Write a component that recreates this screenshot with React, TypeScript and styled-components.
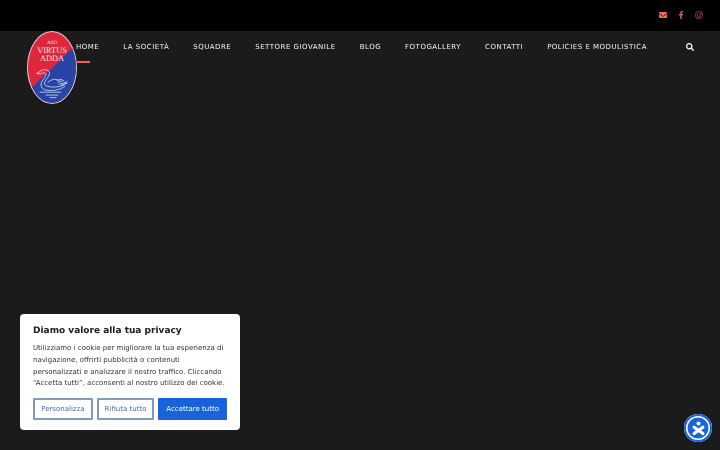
import React from "react";
import styled, { createGlobalStyle } from "styled-components";
import { FaEnvelope, FaFacebookF, FaInstagram, FaSearch } from "react-icons/fa";

const GlobalStyle = createGlobalStyle`
    html, body {
        margin: 0;
        padding: 0;
        height: 100%;
        background: #1b1b1b;
        font-family: "DejaVu Sans", sans-serif;
        text-rendering: geometricPrecision;
        overflow: hidden;
    }
`;

const menu = [
    "HOME",
    "LA SOCIETÀ",
    "SQUADRE",
    "SETTORE GIOVANILE",
    "BLOG",
    "FOTOGALLERY",
    "CONTATTI",
    "POLICIES E MODULISTICA"
];

const Logo: React.FunctionComponent = () => (
    <LogoSvg viewBox="0 0 50 74" preserveAspectRatio="none">
        <defs>
            <clipPath id="oval">
                <ellipse cx="25" cy="37" rx="24" ry="36" />
            </clipPath>
        </defs>
        <ellipse cx="25" cy="37" rx="25" ry="37" fill="#e6cdd6" />
        <g clipPath="url(#oval)">
            <rect width="50" height="74" fill="#e0263c" />
            <polygon points="50,13 50,74 0,74 0,62" fill="#2844a8" />
        </g>
        <LogoText x="25" y="13.5" fontSize="5">ASD</LogoText>
        <LogoText x="25" y="22.5" fontSize="8.4">VIRTUS</LogoText>
        <LogoText x="25" y="30.5" fontSize="8.4">ADDA</LogoText>
        <g fill="none" stroke="#eef0f8" strokeWidth="0.7" strokeLinecap="round">
            <path d="M10 43 L13 41 C15 38.5 20 38.5 22 41 C24 44 20 48 18 51 C17 53 17.5 55 20 56 C25 57.5 32 57 36 55 C38 54 39.5 52.5 40 51" />
            <path d="M10 43 L13.5 43.5 C15 42 18 42 19 43.5 C20 45 16 49 14.5 52 C13 56 15 59 19 60 C25 61 33 60 38 56" />
            <path d="M21 52 C24 49 28 48 32 50 M30 50 L35 49 M31 52 L37 50 M32 54 L39 52 M34 55 L40 53" />
            <path d="M13 62 L34 62 M19 65 L31 65 M23 67.5 L29 67.5" />
        </g>
    </LogoSvg>
);

const App: React.FunctionComponent = () => {
    return (
        <Page>
            <GlobalStyle />
            <TopBar>
                <Social bright><FaEnvelope /></Social>
                <Social><FaFacebookF /></Social>
                <Social><FaInstagram /></Social>
            </TopBar>
            <Navbar>
                <Logo />
                <Menu>
                    {menu.map((item, i) => (
                        <MenuItem key={item} active={i === 0}>{item}</MenuItem>
                    ))}
                </Menu>
                <SearchButton><FaSearch /></SearchButton>
            </Navbar>
            <CookieBox>
                <CookieTitle>Diamo valore alla tua privacy</CookieTitle>
                <CookieText>
                    Utilizziamo i cookie per migliorare la tua esperienza di navigazione, offrirti pubblicità o contenuti personalizzati e analizzare il nostro traffico. Cliccando “Accetta tutti”, acconsenti al nostro utilizzo dei cookie.
                </CookieText>
                <CookieButtons>
                    <CookieButton width={60}>Personalizza</CookieButton>
                    <CookieButton width={58}>Rifiuta tutto</CookieButton>
                    <CookieButton width={69} primary>Accettare tutto</CookieButton>
                </CookieButtons>
            </CookieBox>
            <AccessButton>
                <svg viewBox="0 0 24 24" width="15" height="15" fill="none" stroke="#fff" strokeWidth="5" strokeLinecap="round">
                    <circle cx="12" cy="4" r="3.2" fill="#fff" stroke="none" />
                    <path d="M5 20 L19 10" />
                    <path d="M19 20 L5 10" />
                </svg>
            </AccessButton>
        </Page>
    );
};

const Page = styled.div`
    position: relative;
    width: 720px;
    height: 450px;
    background: #1b1b1b;
    overflow: hidden;
`;

const TopBar = styled.div`
    height: 31px;
    background: #000;
    display: flex;
    justify-content: flex-end;
    align-items: center;
    gap: 10px;
    padding: 0 17px 2px 0;
    box-sizing: border-box;
`;

const Social = styled.span<{ bright?: boolean }>`
    width: 8px;
    display: flex;
    justify-content: center;
    font-size: 8px;
    color: ${props => (props.bright ? "#f0705a" : "#c9604e")};
`;

const Navbar = styled.div`
    position: relative;
    display: flex;
    align-items: flex-start;
    padding-left: 76px;
`;

const LogoSvg = styled.svg`
    position: absolute;
    left: 27px;
    top: 0;
    width: 50px;
    height: 73px;
`;

const LogoText = styled.text`
    font-family: "Liberation Serif", serif;
    fill: #eee4e8;
    text-anchor: middle;
`;

const Menu = styled.div`
    display: flex;
    gap: 24px;
    position: relative;
    will-change: transform;
`;

const MenuItem = styled.div<{ active?: boolean }>`
    position: relative;
    height: 33px;
    padding-top: 11px;
    box-sizing: border-box;
    font-size: 7px;
    line-height: 10px;
    letter-spacing: 0.5px;
    color: #f2f2f2;
    white-space: nowrap;

    &::after {
        content: "";
        display: ${props => (props.active ? "block" : "none")};
        position: absolute;
        left: 1px;
        width: 13px;
        top: 30px;
        height: 2px;
        background: #e8654f;
    }
`;

const SearchButton = styled.div`
    position: absolute;
    left: 686px;
    top: 12px;
    font-size: 8px;
    color: #fff;
    display: flex;
`;

const CookieBox = styled.div`
    position: absolute;
    left: 20px;
    top: 314px;
    width: 220px;
    height: 116px;
    box-sizing: border-box;
    padding: 11px 13px 0 13px;
    background: #fff;
    border-radius: 4px;
`;

const CookieTitle = styled.div`
    font-size: 9px;
    line-height: 12px;
    font-weight: 700;
    color: #212121;
    white-space: nowrap;
    will-change: transform;
`;

const CookieText = styled.p`
    margin: 6px 0 0 0;
    font-size: 7px;
    line-height: 11.8px;
    color: #333;
    width: 194px;
    will-change: transform;
`;

const CookieButtons = styled.div`
    display: flex;
    gap: 4px;
    margin-top: 8px;
    will-change: transform;
`;

const CookieButton = styled.div<{ primary?: boolean; width: number }>`
    width: ${props => props.width}px;
    height: 22px;
    box-sizing: border-box;
    display: flex;
    align-items: center;
    justify-content: center;
    font-size: 7px;
    white-space: nowrap;
    border-radius: 1px;
    border: 2px solid ${props => (props.primary ? "#1863dc" : "#7f9bbd")};
    background: ${props => (props.primary ? "#1863dc" : "#fff")};
    color: ${props => (props.primary ? "#fff" : "#3f6fb0")};
`;

const AccessButton = styled.div`
    position: absolute;
    left: 684px;
    top: 414px;
    width: 28px;
    height: 28px;
    box-sizing: border-box;
    border-radius: 50%;
    background: #1a63dc;
    box-shadow: inset 0 0 0 2px #1a63dc, inset 0 0 0 3.5px #fff;
    display: flex;
    align-items: center;
    justify-content: center;
`;

export default App;
